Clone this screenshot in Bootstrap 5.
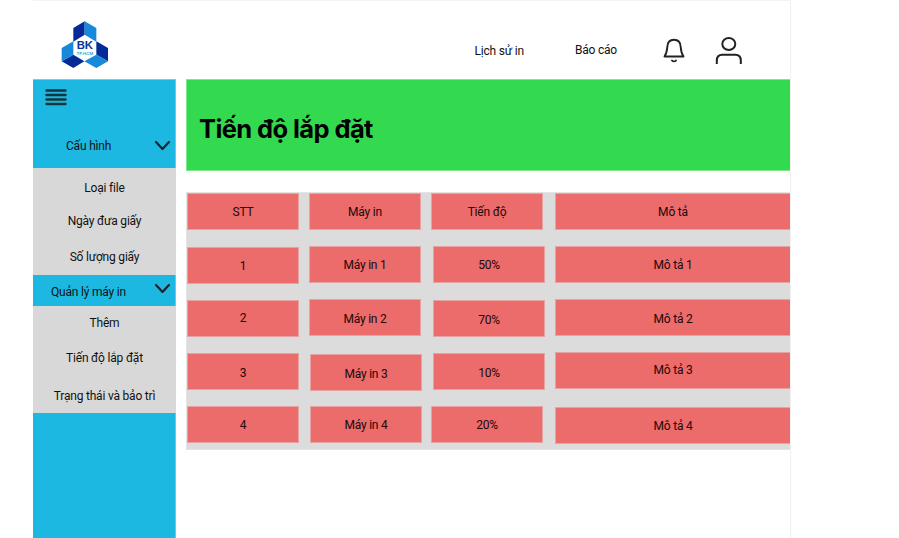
<!DOCTYPE html>
<html lang="vi">
<head>
<meta charset="utf-8">
<meta name="viewport" content="width=device-width, initial-scale=1">
<title>Tiến độ lắp đặt</title>
<link rel="stylesheet" href="https://cdn.jsdelivr.net/npm/bootstrap@5.3.0/dist/css/bootstrap.min.css">
<style>
body{font-family:Roboto,sans-serif;font-size:12px;letter-spacing:-.2px;line-height:16px;color:#111;background:#fff}
.app-frame{width:758px;height:538px;margin-left:33px;border-top:1px solid #f3f3f3;border-right:1px solid #f1f1f1}
.app-header{height:78px;padding:0 48px 0 27px}
.logo{margin-top:19px}
.logo-svg{width:50px;height:50px;display:block;letter-spacing:0}
.link-history{margin:42px 51px 0 0}
.link-report{margin:41px 46px 0 0}
.icon-bell{width:22px;height:27px;margin:36px 29px 0 0}
.icon-user{width:28px;height:30px;margin-top:35px}
.app-header a{color:#111}
.side{width:143px;background:#1cb8e2;border-top:1px solid #6fd2ec;border-right:1px solid #5fceea}
.burger{width:22px;height:17px;margin:9px 0 0 12px}
.side-head{height:31px;padding-right:4px}
.side-head svg{width:17px;height:11px}
.head-config{height:45px;margin-top:17px}
.head-config .head-label{margin:1px 0 0 33px}
.head-manage .head-label{margin:3px 0 0 18px}
.head-manage svg{margin-top:-4px}
.side-list{height:107px;background:#d8d8d8;padding-top:12px;margin-right:-1px}
.side-list.list-manage{padding-top:9px}
.side-list a{color:#111;height:16px}
.gap-a{margin-top:17px}.gap-b{margin-top:20px}.gap-c{margin-top:19px}.gap-d{margin-top:22px}
.content{margin-left:10px;min-width:0}
.banner{height:92px;background:#33d94e;border:1px solid #7be88c;border-right:0;padding:8px 0 0 12px}
.banner h1{font-family:Inter,sans-serif;font-size:25.500px;font-weight:700;letter-spacing:-.6px;line-height:32px;color:#000}
.board{height:258px;margin-top:21px;background:#dcdcdc;border:1px solid #e4e4e4;border-right:0}
.grid-rows{display:grid;grid-template-columns:112px 112px 114px 235px;column-gap:10px;grid-auto-rows:53.250px}
.cell{width:112px;height:37px;background:#ec6b6b;border:1px solid #e5a3a3;color:#1c0808;display:flex;align-items:center;justify-content:center}
.cell:nth-child(4n){width:235px;border-right:0}
.up-1{margin-top:-1px}.dn-1{margin-top:1px}
.rt-1{margin-left:1px}.rt-2{margin-left:2px}
.low{padding-top:3px}
</style>
</head>
<body>
<div class="app-frame d-flex flex-column">
  <header class="app-header d-flex align-items-start">
    <a class="logo me-auto" href="#" aria-label="BK TP.HCM">
      <svg class="logo-svg" viewBox="120 60 150 150">
        <path fill="#032a96" d="M160 84l34-20v40l-34 21zM125 184l35-20 33 20-33 20zM229 124l35 20v40l-35-20z"/>
        <path fill="#1689db" d="M194 64l35 20v41l-35-21zM125 144l35-20v40l-35 20zM193 184l36-20 35 20-35 20z"/>
        <text x="194.500" y="147" text-anchor="middle" font-family="Liberation Sans,sans-serif" font-weight="700" font-size="32" textLength="49" lengthAdjust="spacingAndGlyphs" fill="#0b3596">BK</text>
        <text x="194.500" y="166" text-anchor="middle" font-family="Liberation Sans,sans-serif" font-weight="700" font-size="12" textLength="50" lengthAdjust="spacingAndGlyphs" fill="#3a9fe0">TP.HCM</text>
      </svg>
    </a>
    <a class="link-history text-decoration-none" href="#">Lịch sử in</a>
    <a class="link-report text-decoration-none" href="#">Báo cáo</a>
    <svg class="icon-bell" viewBox="0 0 22 27" fill="none" stroke="#222" stroke-width="1.900" stroke-linecap="round" stroke-linejoin="round"><path d="M1.500 19.500C3.300 17 4 14.500 4.300 10 4.500 5.200 7 2.800 11 2.800s6.500 2.400 6.700 7.200c.3 4.500 1 7 2.800 9.500zM9 23.500c1 1.200 3 1.200 4 0" /></svg>
    <svg class="icon-user" viewBox="0 0 28 30" fill="none" stroke="#222" stroke-width="2"><ellipse cx="14.800" cy="8" rx="6.500" ry="5.900"/><path d="M2.800 28v-3.500c0-4 2-5.800 5.500-5.800h13c3.500 0 5.500 1.800 5.500 5.800V28"/></svg>
  </header>
  <div class="d-flex flex-grow-1">
    <nav class="side d-flex flex-column flex-shrink-0">
      <svg class="burger" viewBox="0 0 22 17" stroke="#15343e" stroke-width="2.400" stroke-linecap="round"><path d="M1.500 1.500h19M1.500 6h19M1.500 10.500h19M1.500 15h19"/></svg>
      <div class="side-head head-config d-flex align-items-center justify-content-between">
        <span class="head-label">Cấu hình</span>
        <svg viewBox="0 0 17 11" fill="none" stroke="#17252a" stroke-width="2.200" stroke-linecap="round" stroke-linejoin="round"><path d="M2 2l6.500 7L15 2"/></svg>
      </div>
      <div class="side-list d-flex flex-column align-items-center">
        <a class="text-decoration-none" href="#">Loại file</a>
        <a class="text-decoration-none gap-a" href="#">Ngày đưa giấy</a>
        <a class="text-decoration-none gap-b" href="#">Số lượng giấy</a>
      </div>
      <div class="side-head head-manage d-flex align-items-center justify-content-between">
        <span class="head-label">Quản lý máy in</span>
        <svg viewBox="0 0 17 11" fill="none" stroke="#17252a" stroke-width="2.200" stroke-linecap="round" stroke-linejoin="round"><path d="M2 2l6.500 7L15 2"/></svg>
      </div>
      <div class="side-list list-manage d-flex flex-column align-items-center">
        <a class="text-decoration-none" href="#">Thêm</a>
        <a class="text-decoration-none gap-c" href="#">Tiến độ lắp đặt</a>
        <a class="text-decoration-none gap-d" href="#">Trạng thái và bảo trì</a>
      </div>
    </nav>
    <main class="content flex-grow-1">
      <div class="banner d-flex align-items-center"><h1 class="m-0">Tiến độ lắp đặt</h1></div>
      <section class="board">
        <div class="grid-rows">
          <div class="cell">STT</div><div class="cell">Máy in</div><div class="cell">Tiến độ</div><div class="cell">Mô tả</div>
          <div class="cell dn-1">1</div><div class="cell">Máy in 1</div><div class="cell rt-2">50%</div><div class="cell">Mô tả 1</div>
          <div class="cell">2</div><div class="cell up-1 low">Máy in 2</div><div class="cell rt-2 low">70%</div><div class="cell up-1 low">Mô tả 2</div>
          <div class="cell low">3</div><div class="cell rt-1 dn-1 low">Máy in 3</div><div class="cell rt-2 low">10%</div><div class="cell up-1">Mô tả 3</div>
          <div class="cell">4</div><div class="cell rt-1">Máy in 4</div><div class="cell">20%</div><div class="cell dn-1">Mô tả 4</div>
        </div>
      </section>
    </main>
  </div>
</div>
<script src="https://cdn.jsdelivr.net/npm/bootstrap@5.3.0/dist/js/bootstrap.bundle.min.js"></script>
</body>
</html>
